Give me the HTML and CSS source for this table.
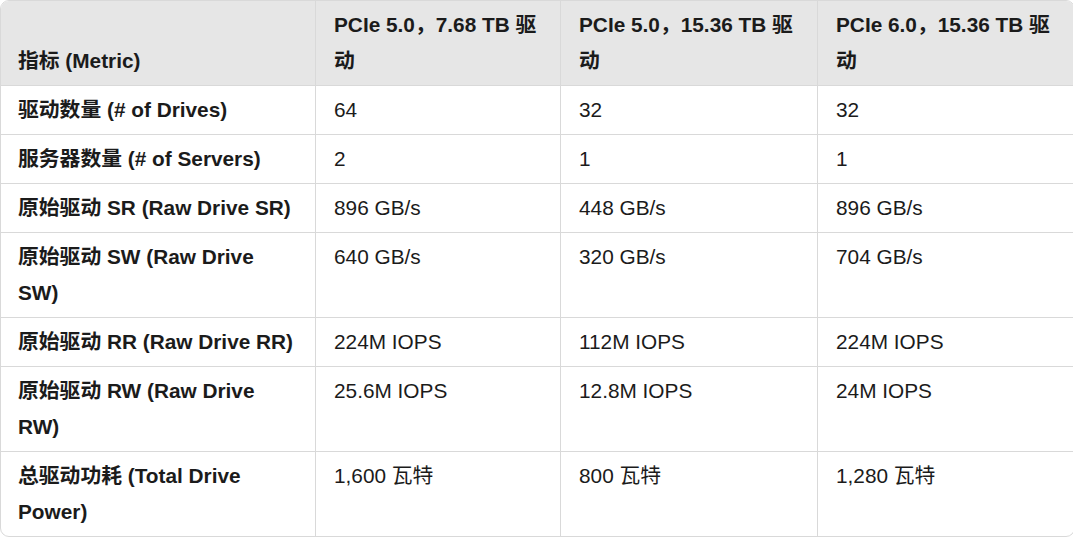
FILE: index.html
```html
<!DOCTYPE html>
<html lang="zh">
<head>
<meta charset="utf-8">
<link rel="stylesheet" href="styles.css">
</head>
<body>
<table class="spec">
  <colgroup>
    <col class="c1"><col class="c2"><col class="c3"><col class="c4">
  </colgroup>
  <thead>
    <tr>
      <th>指标 (Metric)</th>
      <th>PCIe 5.0，7.68 TB 驱动</th>
      <th>PCIe 5.0，15.36 TB 驱动</th>
      <th>PCIe 6.0，15.36 TB 驱动</th>
    </tr>
  </thead>
  <tbody>
    <tr><td class="m">驱动数量 (# of Drives)</td><td>64</td><td>32</td><td>32</td></tr>
    <tr><td class="m">服务器数量 (# of Servers)</td><td>2</td><td>1</td><td>1</td></tr>
    <tr><td class="m">原始驱动 SR (Raw Drive SR)</td><td>896 GB/s</td><td>448 GB/s</td><td>896 GB/s</td></tr>
    <tr><td class="m">原始驱动 SW (Raw Drive SW)</td><td>640 GB/s</td><td>320 GB/s</td><td>704 GB/s</td></tr>
    <tr><td class="m">原始驱动 RR (Raw Drive RR)</td><td>224M IOPS</td><td>112M IOPS</td><td>224M IOPS</td></tr>
    <tr><td class="m">原始驱动 RW (Raw Drive RW)</td><td>25.6M IOPS</td><td>12.8M IOPS</td><td>24M IOPS</td></tr>
    <tr><td class="m">总驱动功耗 (Total Drive Power)</td><td>1,600 瓦特</td><td>800 瓦特</td><td>1,280 瓦特</td></tr>
  </tbody>
</table>
</body>
</html>
```

FILE: styles.css
```css
html, body {
  margin: 0;
  padding: 0;
  background: #ffffff;
}
body {
  font-family: "Liberation Sans", Arial, "Noto Sans CJK SC", sans-serif;
  font-size: 20.8px;
  color: #1b1b1b;
}
.spec {
  width: 1073px;
  table-layout: fixed;
  border-collapse: separate;
  border-spacing: 0;
  border: 1px solid #d9d9d9;
  border-radius: 9px;
  overflow: hidden;
}
.c1 { width: 315px; }
.c2 { width: 245px; }
.c3 { width: 257px; }
.c4 { width: 256px; }
.spec th,
.spec td {
  padding: 6px 15px 6px 18px;
  line-height: 36px;
  text-align: left;
  border-right: 1px solid #d9d9d9;
  border-bottom: 1px solid #d9d9d9;
}
.spec th:first-child,
.spec td:first-child {
  padding-left: 17px;
  padding-right: 16px;
}
.spec th:last-child,
.spec td:last-child {
  border-right: none;
}
.spec tbody tr:last-child td {
  border-bottom: none;
}
.spec th {
  background: #e6e6e6;
  font-weight: bold;
  vertical-align: bottom;
}
.spec td {
  vertical-align: top;
  font-weight: normal;
}
.spec td.m {
  font-weight: bold;
}
```
